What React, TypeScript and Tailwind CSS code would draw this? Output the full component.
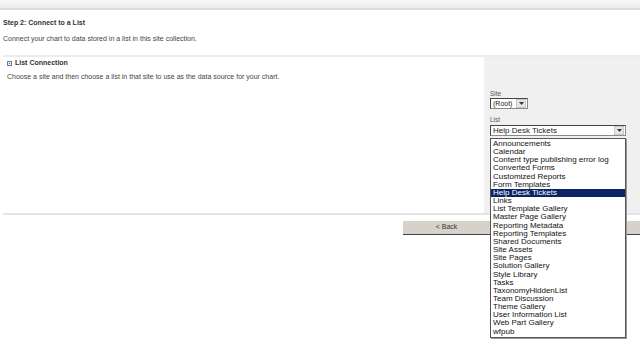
import React from "react";

const items = [
  "Announcements",
  "Calendar",
  "Content type publishing error log",
  "Converted Forms",
  "Customized Reports",
  "Form Templates",
  "Help Desk Tickets",
  "Links",
  "List Template Gallery",
  "Master Page Gallery",
  "Reporting Metadata",
  "Reporting Templates",
  "Shared Documents",
  "Site Assets",
  "Site Pages",
  "Solution Gallery",
  "Style Library",
  "Tasks",
  "TaxonomyHiddenList",
  "Team Discussion",
  "Theme Gallery",
  "User Information List",
  "Web Part Gallery",
  "wfpub",
];

function Arrow() {
  return (
    <div className="flex h-[9px] w-[10px] items-center justify-center border border-[#c8c8c8] bg-[#e6e6e6]">
      <svg width="5" height="3" viewBox="0 0 5 3">
        <path d="M0 0H5L2.5 3Z" fill="#333" />
      </svg>
    </div>
  );
}

export default function App() {
  return (
    <div
      className="relative h-[355px] w-[640px] overflow-hidden bg-white text-[#333]"
      style={{ fontFamily: '"Liberation Sans", Arial, sans-serif' }}
    >
      <div className="h-[10px] bg-gradient-to-b from-[#f7f7f7] to-[#ececec] border-b-2 border-[#dcdcdc]" />
      <div className="pl-[3px]">
        <div className="mt-[8px] text-[7px] font-bold leading-[10px] text-[#333]">
          Step 2: Connect to a List
        </div>
        <div className="mt-[6px] text-[7px] leading-[10px] text-[#444]">
          Connect your chart to data stored in a list in this site collection.
        </div>
        <div className="mt-[11px] flex border-t-2 border-[#ececec]">
          <div className="flex-1 pl-[4px] pt-[1px]">
            <div className="flex items-center gap-[3px] text-[7px] font-bold leading-[10px]">
              <div className="flex h-[5px] w-[5px] flex-col justify-center border border-[#6a7ea8] bg-[#e8eef8] px-[1px]">
                <div className="h-px bg-[#4b5f8a]" />
              </div>
              <span>List Connection</span>
            </div>
            <div className="mt-[4px] text-[7px] leading-[10px] text-[#444]">
              Choose a site and then choose a list in that site to use as the data source for your chart.
            </div>
          </div>
          <div className="h-[156px] w-[156px] bg-[#f0f0f0] pl-[6px] pt-[33px]">
            <div className="text-[6.5px] leading-[8px] text-[#555]">Site</div>
            <div className="flex h-[11px] w-[38px] items-center justify-between border border-[#8a8a8a] border-l-[#444] border-t-[#444] bg-white pl-[2px] pr-[1px]">
              <span className="text-[7px] leading-none text-[#222]">(Root)</span>
              <Arrow />
            </div>
            <div className="mt-[7px] text-[6.5px] leading-[8px] text-[#555]">List</div>
            <div className="mt-[1px] flex h-[11px] w-[136px] items-center justify-between border border-[#8a8a8a] border-l-[#444] border-t-[#444] bg-white pl-[2px] pr-[1px]">
              <span className="text-[8px] leading-none text-[#222]">Help Desk Tickets</span>
              <Arrow />
            </div>
          </div>
        </div>
        <div className="h-[2px] bg-[#e4e4e4]" />
      </div>
      <div className="mt-[6px] flex gap-[14px] pl-[403px]">
        {["< Back", "", "Finish"].map((b, i) => (
          <div
            key={i}
            className="flex h-[14px] w-[88px] shrink-0 items-center justify-center border-b border-r border-[#404040] bg-[#d6d2ca] text-[7px] text-[#333]"
          >
            {b}
          </div>
        ))}
      </div>
      <div className="absolute left-[490px] top-[138px] w-[136px] border border-[#555] bg-white py-[1px] shadow-[1px_1px_0_#999]">
        {items.map((it) => (
          <div
            key={it}
            className={
              "h-[8.17px] overflow-hidden whitespace-nowrap px-[2px] text-[8px] leading-[8.17px] " +
              (it === "Help Desk Tickets" ? "bg-[#0b2466] text-white" : "text-[#111]")
            }
          >
            {it}
          </div>
        ))}
      </div>
    </div>
  );
}
